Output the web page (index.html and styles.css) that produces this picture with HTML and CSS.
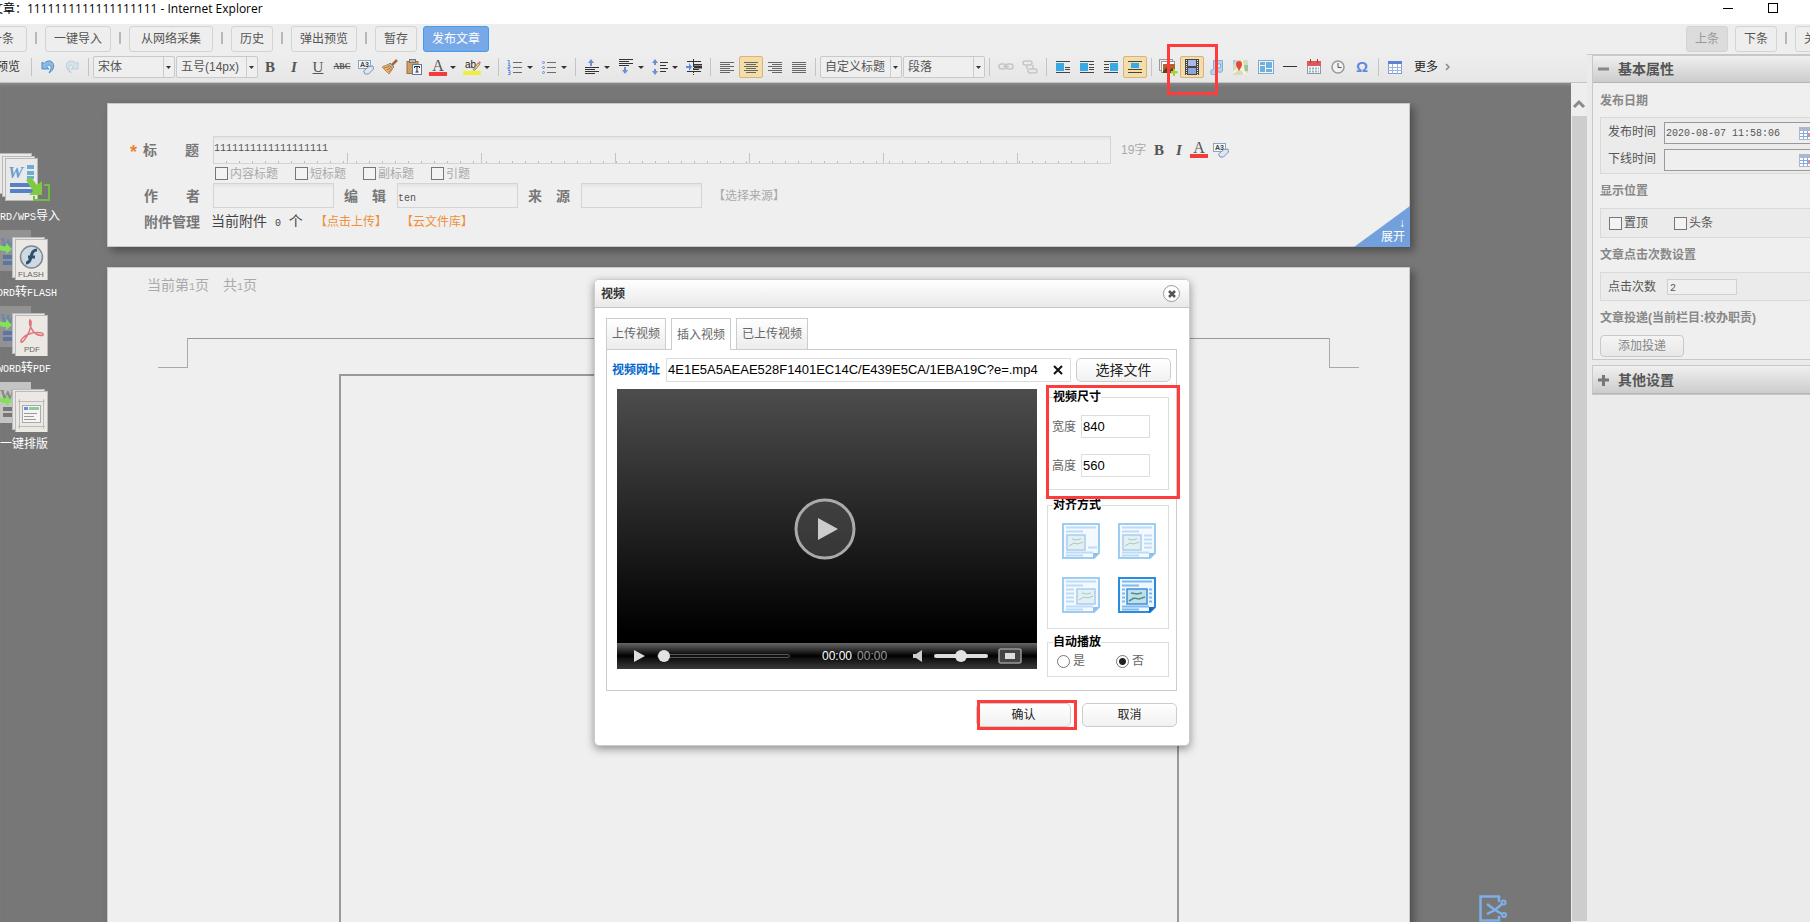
FILE: index.html
```html
<!DOCTYPE html>
<html lang="zh-CN">
<head>
  <meta charset="UTF-8"/>
  <meta name="viewport" content="width=device-width, initial-scale=1.0"/>
  <title>文章：1111111111111111111</title>
  <link rel="stylesheet" href="styles.css">
</head>
<body>
  <!-- 窗口标题栏 -->
  <div class="titlebar">
    <span class="title-text">文章：1111111111111111111 - Internet Explorer</span>
    <svg class="win-btns" width="60" height="16" viewBox="0 0 60 16" fill="none" stroke="#000"><path d="M3 7.500h10"/><rect x="48.500" y="2.500" width="9" height="9"/></svg>
  </div>

  <!-- 操作按钮 -->
  <div class="actions">
    <button class="btn first">一条</button><i class="bar"></i>
    <button class="btn">一键导入</button><i class="bar"></i>
    <button class="btn wide">从网络采集</button><i class="bar"></i>
    <button class="btn">历史</button><i class="bar"></i>
    <button class="btn">弹出预览</button><i class="bar"></i>
    <button class="btn">暂存</button>
    <button class="btn primary">发布文章</button>
    <div class="actions-right">
      <button class="btn" disabled>上条</button>
      <button class="btn">下条</button><i class="bar"></i>
      <button class="btn">关闭</button>
    </div>
  </div>

  <div class="main">
    <div class="editor">
      <!-- 编辑工具栏 -->
      <div class="toolbar">
        <button class="preview">预览</button><i class="sep"></i>
        <button class="tb" title="撤销"><svg width="14" height="14" viewBox="0 0 14 14"><path d="M1 2v7h7L5.500 6.500C8 4 11 5.500 10 9l-2 4c5-3 6-8 3-11-2-2-6-1-8 1.500z" fill="#8bb9e6" stroke="#4f8dcb"/></svg></button>
        <button class="tb" title="重做"><svg width="14" height="14" viewBox="0 0 14 14"><path d="M13 2v7H6l2.500-2.500C6 4 3 5.500 4 9l2 4C1 10 0 5 3 2c2-2 6-1 8 1.500z" fill="#d3e2ec" stroke="#bcd0de"/></svg></button>
        <i class="sep"></i>
        <select class="tb-select" aria-label="字体"><option>宋体</option></select>
        <select class="tb-select" aria-label="字号"><option>五号(14px)</option></select>
        <button class="tb serif bold">B</button>
        <button class="tb serif bold italic">I</button>
        <button class="tb serif under">U</button>
        <button class="tb serif strike">ABC</button>
        <button class="tb" title="清除格式"><svg width="16" height="16" viewBox="0 0 16 16"><rect x=".5" y="1.500" width="12" height="8" fill="#f3f7fb" stroke="#8aa4c4"/><text x="2" y="8" font-family="Liberation Sans" font-size="7" font-weight="bold" fill="#444">A3</text><path d="M5.500 12 11 7.500l4-.5.5 3-5 5H7z" fill="#dfe6f2" stroke="#7f93b2"/></svg></button>
        <button class="tb" title="格式刷"><svg width="16" height="16" viewBox="0 0 16 16"><path d="M15 1 10 6" stroke="#a3683c" stroke-width="2.500"/><path d="m8 4 4 4-1.500 1.500-4-4z" fill="#b7b7b7" stroke="#8a7a6a"/><path d="M6 5.500 0 8l7 7 3.500-5z" fill="#edba77" stroke="#bf8747"/><path d="m2 9 5-1.500M4.500 11l4-2M6.500 13l3-3" stroke="#a8733a"/></svg></button>
        <button class="tb" title="粘贴文本"><svg width="16" height="16" viewBox="0 0 16 16"><rect x="1" y="2.500" width="11" height="12" fill="#cf9d66" stroke="#9c6e41"/><rect x="3.500" y=".5" width="6" height="3" fill="#bbb" stroke="#777"/><rect x="6.500" y="5.500" width="9" height="10" fill="#f4f7fb" stroke="#62799a"/><path d="M8.500 9V7.500h5V9M11 7.500V13M9.500 13h3" fill="none" stroke="#222"/></svg></button>
        <button class="tb drop serif"><span class="fc red">A</span></button>
        <button class="tb drop" title="背景色"><svg width="18" height="16" viewBox="0 0 18 16"><rect y="12" width="18" height="4" fill="#f1ee3a"/><text x="2" y="9" font-family="Liberation Sans" font-size="10" fill="#222">ab</text><path d="m10 11 5-7 2 1-5 6z" fill="#ecc979" stroke="#a88a55"/><path d="m15 4 1-2 2 1.500L17 5z" fill="#e27c7c"/></svg></button>
        <i class="sep"></i>
        <button class="tb drop" title="编号"><svg width="16" height="16" viewBox="0 0 16 16"><path d="M6 3.500h9M6 8.500h9M6 13.500h9" stroke="#6b6b6b"/><path d="M2 1v4M.5 1.500H2M1 5h2M1 6.500h2v2H1v1.500h2M1 11.500h2v4H1M1.500 13.500H3" fill="none" stroke="#5f8be0"/></svg></button>
        <button class="tb drop" title="列表"><svg width="16" height="16" viewBox="0 0 16 16"><path d="M6 3.500h9M6 8.500h9M6 13.500h9" stroke="#6b6b6b"/><g fill="none" stroke="#5f8be0"><circle cx="2.500" cy="3.500" r="1"/><circle cx="2.500" cy="8.500" r="1"/><circle cx="2.500" cy="13.500" r="1"/></g></svg></button>
        <i class="sep"></i>
        <button class="tb drop" title="段前距"><svg width="16" height="16" viewBox="0 0 16 16"><path d="M1 8.500h14M1 10.500h10M1 12.500h14M1 14.500h10" stroke="#333"/><path d="m7 0 3 4H8v3H6V4H4z" fill="#6c8fd0"/></svg></button>
        <button class="tb drop" title="段后距"><svg width="16" height="16" viewBox="0 0 16 16"><path d="M1 .5h14M1 2.500h10M1 4.500h14M1 6.500h10" stroke="#333"/><path d="m7 15 3-4H8V8H6v3H4z" fill="#6c8fd0"/></svg></button>
        <button class="tb drop" title="行距"><svg width="16" height="16" viewBox="0 0 16 16"><path d="M8 3.500h8M8 6.500h6M8 9.500h8M8 12.500h6" stroke="#333"/><path d="m3 0 3 4H4v2H2V4H0zM3 16l3-4H4v-2H2v2H0z" fill="#6c8fd0"/></svg></button>
        <button class="tb" title="缩进"><svg width="16" height="16" viewBox="0 0 16 16"><path d="M1 2.500h14M7 5.500h9M7 10.500h6M1 12.500h14" stroke="#333"/><path d="M8 8h8" stroke="#333" stroke-width="3"/><path d="M7.500 0v16" stroke="#333" stroke-dasharray="2 1"/><path d="m6 8-3-4v3H0v2h3v3z" fill="#5f8be0"/></svg></button>
        <i class="sep"></i>
        <button class="tb" title="左对齐"><svg width="14" height="12" viewBox="0 0 14 12" stroke="#666"><path d="M0 1.500h14M0 3.500h10M0 5.500h14M0 7.500h10M0 9.500h14M0 11.500h10"/></svg></button>
        <button class="tb on" title="居中"><svg width="14" height="12" viewBox="0 0 14 12" stroke="#666"><path d="M0 1.500h14M2 3.500h10M0 5.500h14M2 7.500h10M0 9.500h14M2 11.500h10"/></svg></button>
        <button class="tb" title="右对齐"><svg width="14" height="12" viewBox="0 0 14 12" stroke="#666"><path d="M0 1.500h14M4 3.500h10M0 5.500h14M4 7.500h10M0 9.500h14M4 11.500h10"/></svg></button>
        <button class="tb" title="两端对齐"><svg width="14" height="12" viewBox="0 0 14 12" stroke="#666"><path d="M0 1.500h14M0 3.500h14M0 5.500h14M0 7.500h14M0 9.500h14M0 11.500h14"/></svg></button>
        <i class="sep"></i>
        <select class="tb-select" aria-label="自定义标题"><option>自定义标题</option></select>
        <select class="tb-select" aria-label="段落"><option>段落</option></select>
        <i class="sep"></i>
        <button class="tb" title="链接"><svg width="16" height="16" viewBox="0 0 16 16" fill="none" stroke="#c6c6c6" stroke-width="1.500"><rect x="1" y="5" width="7" height="5" rx="2.500"/><rect x="8" y="5" width="7" height="5" rx="2.500"/><path d="M5 7.500h6"/></svg></button>
        <button class="tb" title="取消链接"><svg width="16" height="16" viewBox="0 0 16 16" fill="none" stroke="#c6c6c6" stroke-width="1.500"><rect x="1" y="2" width="9" height="4" rx="2"/><rect x="6" y="10" width="9" height="4" rx="2"/><path d="M5 6v4M11 6v4"/></svg></button>
        <i class="sep"></i>
        <button class="tb" title="左环绕"><svg width="14" height="12" viewBox="0 0 14 12"><path d="M0 .5h14M9 6.500h5M9 8.500h5M0 11.500h14" stroke="#444"/><rect y="2" width="8" height="8" fill="#38a9e4"/></svg></button>
        <button class="tb" title="左侧"><svg width="14" height="12" viewBox="0 0 14 12"><path d="M0 .5h14M9 3.500h5M9 6.500h5M9 8.500h5M0 11.500h14" stroke="#444"/><rect y="2" width="8" height="8" fill="#38a9e4"/></svg></button>
        <button class="tb" title="右侧"><svg width="14" height="12" viewBox="0 0 14 12"><path d="M0 .5h14M0 3.500h5M0 6.500h5M0 8.500h5M0 11.500h14" stroke="#444"/><rect x="6" y="2" width="8" height="8" fill="#38a9e4"/></svg></button>
        <button class="tb on" title="图文居中"><svg width="14" height="12" viewBox="0 0 14 12"><path d="M0 .5h14M0 8.500h14M0 11.500h14" stroke="#444"/><rect x="3" y="2" width="8" height="5" fill="#38a9e4"/></svg></button>
        <i class="sep"></i>
        <button class="tb" title="图片"><svg width="20" height="18" viewBox="0 0 20 18"><rect x="1.500" y="1.500" width="13" height="11" fill="#eee" stroke="#999"/><rect x="3.500" y="3.500" width="13" height="11" fill="#fff" stroke="#999"/><rect x="5" y="6" width="12" height="9" fill="#b2622f"/><path d="m5 13 4-4 3 3 2-2 3 3v2H5z" fill="#5d4020"/><path d="M13 13h2v-2h2v2h2.500v2.500H17V18h-2v-2.500h-2z" fill="#a9cf3b"/></svg></button>
        <button class="tb on film" title="视频"><svg width="14" height="16" viewBox="0 0 14 16"><rect width="14" height="16" fill="#444"/><rect x="3" y="1" width="8" height="6" fill="#a9b8e8"/><rect x="3" y="9" width="8" height="6" fill="#8fa3dd"/><path d="M1.500 1v15M12.500 1v15" stroke="#eee" stroke-dasharray="1 1"/></svg><i class="mark"></i></button>
        <button class="tb" title="音乐"><svg width="16" height="16" viewBox="0 0 16 16" fill="#b3d3ee" stroke="#7fb0dc"><path d="M5.500 1.500h9v9.500a2.500 2.500 0 1 1-2-2.500V5H8v8a2.700 2.700 0 1 1-2.500-2.500z"/></svg></button>
        <button class="tb tb-wide" title="地图"><svg width="15" height="15" viewBox="0 0 15 15"><rect width="15" height="15" fill="#d6dcc2"/><path d="m0 13 6-5 9 7M9 0l2 15" stroke="#f6f3da" stroke-width="2" fill="none"/><path d="M11 5h4v6h-3z" fill="#9cc3a0"/><path d="M0 5l3-5H0z" fill="#a9c7e3"/><path d="M6 11C4 7 3 6 3 4a3 3 0 0 1 6 0c0 2-1 3-3 7z" fill="#e1483e"/></svg></button>
        <button class="tb tb-wide" title="布局"><svg width="16" height="14" viewBox="0 0 16 14"><rect x=".5" y=".5" width="15" height="13" fill="#eef5fb" stroke="#88a9c6"/><path d="M2 2h5v3H2zM8 2h6v6H8zM2 6h5v6H2zM8 9h6v3H8z" fill="#6fb0de"/></svg></button>
        <button class="tb" title="分隔线"><svg width="14" height="2" viewBox="0 0 14 2"><path d="M0 .5h14" stroke="#333"/></svg></button>
        <button class="tb" title="日期"><svg width="14" height="16" viewBox="0 0 14 16"><rect x=".5" y="2.500" width="13" height="12" fill="#f5f8fa" stroke="#8c9aa5"/><rect y="2" width="14" height="5" fill="#e0595a"/><path d="M3.500 0v4M10.500 0v4" stroke="#a33"/><path d="M2 9.500h10M2 12.500h10" stroke="#9fb0bb" stroke-width="2" stroke-dasharray="2 1"/></svg></button>
        <button class="tb" title="时间"><svg width="14" height="14" viewBox="0 0 14 14" fill="none"><circle cx="7" cy="7" r="6" fill="#f2f2f2" stroke="#9a9a9a" stroke-width="1.500"/><path d="M7 3v4.500h3.500" stroke="#555"/></svg></button>
        <button class="tb omega" title="特殊字符">Ω</button>
        <i class="sep"></i>
        <button class="tb" title="表格"><svg width="14" height="13" viewBox="0 0 14 13"><rect x=".5" y=".5" width="13" height="12" fill="#fff" stroke="#7f9ad8"/><path d="M0 1.500h14" stroke="#5f83d2" stroke-width="3"/><path d="M0 6.500h14M0 9.500h14M4.500 3v10M9.500 3v10" stroke="#9fb2e0"/></svg></button>
        <button class="more">更多 <svg width="5" height="8" viewBox="0 0 5 8" fill="none" stroke="#888" stroke-width="1.500"><path d="m1 1 3 3-3 3"/></svg></button>
      </div>

      <div class="work">
        <!-- 左侧导入工具 -->
        <div class="tools">
          <button class="tool">
            <svg width="52" height="52" viewBox="0 0 52 52"><g fill="#e9e9e9" stroke="#b9b9b9"><rect x="1.500" y="1.500" width="32" height="40"/><rect x="4.500" y="4.500" width="32" height="40"/><rect x="7.500" y="6.500" width="32" height="42"/></g><text x="10" y="26" font-family="Liberation Serif" font-size="17" font-weight="bold" font-style="italic" fill="#6a9dd0">W</text><path d="M29 13h7v4h-7zM29 19h7v4h-7zM29 24h7v3h-7z" fill="#6eabd6"/><path d="M12 31h24v4H12zM12 37h24v4H12z" fill="#5780c5"/><path d="M46 33h5v15H36v-4" fill="none" stroke="#72bf3e" stroke-width="2"/><path d="m28 28 5-3 6 8 5-4v14H31l4-4z" fill="#7fca42"/></svg>
            <span><span class="mono">WORD/WPS</span>导入</span>
          </button>
          <button class="tool">
            <svg width="52" height="52" viewBox="0 0 52 52"><rect x="0" y="2" width="33" height="41" fill="#929292"/><path d="M5 27h10v4H5zM5 33h10v4H5z" fill="#5b76a5"/><text x="2" y="20" font-family="Liberation Serif" font-size="14" font-weight="bold" fill="#6e87a5">W</text><path d="M0 14c2 4 5 5 8 4v-3l6 6-6 5v-3c-4 0-7-1-8-4z" fill="#84e05a"/><rect x="14.500" y="9.500" width="32" height="40" fill="#e6e6e6" stroke="#bbb"/><rect x="17.500" y="11.500" width="32" height="41" fill="#ece9e5" stroke="#bbb"/><circle cx="33.500" cy="29" r="11" fill="#cfd9e2" stroke="#7a8894" stroke-width="1.500"/><path d="M39 22c-6 0-5 6-7 10-1 2-2 3-4 3M30 29h7" fill="none" stroke="#2f516c" stroke-width="3"/><text x="20" y="49" font-family="Liberation Sans" font-size="8" fill="#666">FLASH</text></svg>
            <span><span class="mono">WORD</span>转<span class="mono">FLASH</span></span>
          </button>
          <button class="tool">
            <svg width="52" height="52" viewBox="0 0 52 52"><rect x="0" y="2" width="33" height="41" fill="#929292"/><path d="M5 27h10v4H5zM5 33h10v4H5z" fill="#5b76a5"/><text x="2" y="20" font-family="Liberation Serif" font-size="14" font-weight="bold" fill="#6e87a5">W</text><path d="M0 14c2 4 5 5 8 4v-3l6 6-6 5v-3c-4 0-7-1-8-4z" fill="#84e05a"/><rect x="14.500" y="9.500" width="32" height="40" fill="#e6e6e6" stroke="#bbb"/><rect x="17.500" y="11.500" width="32" height="41" fill="#ece9e5" stroke="#bbb"/><path d="M32 16c-2 4 2 11 6 14 4 2 8 2 7 0s-9-2-14 0-9 6-8 8 6-5 8-10 3-11 1-12z" fill="none" stroke="#e0737b" stroke-width="1.500"/><text x="26" y="48" font-family="Liberation Sans" font-size="8" fill="#666">PDF</text></svg>
            <span><span class="mono">WORD</span>转<span class="mono">PDF</span></span>
          </button>
          <button class="tool">
            <svg width="52" height="52" viewBox="0 0 52 52"><rect x="0" y="2" width="33" height="41" fill="#c4c4c4"/><path d="M5 27h10v4H5zM5 33h10v4H5z" fill="#777"/><text x="2" y="20" font-family="Liberation Serif" font-size="14" font-weight="bold" fill="#888">W</text><path d="M0 14c2 4 5 5 8 4v-3l6 6-6 5v-3c-4 0-7-1-8-4z" fill="#84e05a"/><rect x="14.500" y="9.500" width="32" height="40" fill="#e6e6e6" stroke="#bbb"/><rect x="17.500" y="11.500" width="32" height="41" fill="#ece9e5" stroke="#bbb"/><path d="M20 21.500h27M20 46.500h27M21.500 19v30M45.500 19v30" stroke="#bbb"/><rect x="24.500" y="25.500" width="18" height="17" fill="#f5f5f5" stroke="#aaa"/><path d="M26 28.500h4" stroke="#5d93e0" stroke-width="3"/><path d="M31 28.500h10" stroke="#8fc9a0" stroke-width="3"/><path d="M26 33.500h13M26 36.500h10M26 39.500h12" stroke="#999"/></svg>
            <span>一键排版</span>
          </button>
        </div>

        <div class="pages">
          <!-- 标题信息 -->
          <form class="sheet meta">
            <div class="row title-row">
              <span class="star">*</span>
              <label class="name" for="f-title"><span>标</span><span>题</span></label>
              <input class="field title-input" type="text" id="f-title" value="1111111111111111111"/>
              <span class="count">19字</span>
              <button type="button" class="tf serif bold">B</button>
              <button type="button" class="tf serif bold italic">I</button>
              <button type="button" class="tf serif"><span class="fc red">A</span></button>
              <button type="button" class="tf" title="清除格式"><svg width="16" height="16" viewBox="0 0 16 16"><rect x=".5" y="1.500" width="12" height="8" fill="#f3f7fb" stroke="#8aa4c4"/><text x="2" y="8" font-family="Liberation Sans" font-size="7" font-weight="bold" fill="#444">A3</text><path d="M5.500 12 11 7.500l4-.5.5 3-5 5H7z" fill="#dfe6f2" stroke="#7f93b2"/></svg></button>
            </div>
            <div class="row checks">
              <label><input type="checkbox"/>内容标题</label>
              <label><input type="checkbox"/>短标题</label>
              <label><input type="checkbox"/>副标题</label>
              <label><input type="checkbox"/>引题</label>
            </div>
            <div class="row author-row">
              <label class="name" for="f-author"><span>作</span><span>者</span></label>
              <input class="field" type="text" id="f-author"/>
              <label class="name short" for="f-editor"><span>编</span><span>辑</span></label>
              <input class="field" type="text" id="f-editor" value="ten"/>
              <label class="name short" for="f-source"><span>来</span><span>源</span></label>
              <input class="field" type="text" id="f-source"/>
              <a class="pick" href="#">【选择来源】</a>
            </div>
            <div class="row attach">
              <b>附件管理</b>
              <span class="attach-n">当前附件 <span class="mono">0</span> 个</span>
              <a href="#">【点击上传】</a>
              <a href="#">【云文件库】</a>
            </div>
            <button type="button" class="expand"><span>↓</span><span>展开</span></button>
          </form>

          <!-- 正文 -->
          <div class="sheet paper">
            <p class="pageno">当前第<span class="mono">1</span>页&#12288;共<span class="mono">1</span>页</p>
            <div class="crop"><i class="corner-l"></i><div class="crop-in"><div class="frame"></div></div><i class="corner-r"></i></div>
          </div>
        </div>

        <div class="gutter">
          <svg width="28" height="27" viewBox="0 0 28 27" fill="none" stroke="#7fafe9" stroke-width="2.500"><path d="M20 7V1.500H1.500v24H20V21"/><path d="m8 9 8 6 7 4M8 19l8-4 7-6" stroke-width="2.500"/><circle cx="24.500" cy="7.500" r="2" stroke-width="2"/><circle cx="25" cy="20" r="2" stroke-width="2"/></svg>
        </div>
        <div class="scroll">
          <svg width="16" height="33" viewBox="0 0 16 33" fill="none" stroke="#8a8a8a" stroke-width="3"><path d="m3 24 5-5 5 5"/></svg>
          <div class="thumb"></div>
        </div>
      </div>
    </div>

    <!-- 右侧属性 -->
    <div class="side">
      <div class="panel">
        <h3><svg width="12" height="12" viewBox="0 0 12 12"><path d="M0 6h11" stroke="#888" stroke-width="3"/></svg>基本属性</h3>
        <div class="panel-body">
          <h4>发布日期</h4>
          <div class="box dates">
            <div><label for="d1">发布时间</label><input type="text" id="d1" value="2020-08-07 11:58:06"/></div>
            <div><label for="d2">下线时间</label><input type="text" id="d2"/></div>
          </div>
          <h4>显示位置</h4>
          <div class="box pos">
            <label><input type="checkbox"/>置顶</label>
            <label><input type="checkbox"/>头条</label>
          </div>
          <h4>文章点击次数设置</h4>
          <div class="box hits"><label for="hits">点击次数</label><input type="text" id="hits" value="2"/></div>
          <h4>文章投递(当前栏目:校办职责)</h4>
          <button class="add">添加投递</button>
        </div>
      </div>
      <div class="panel second">
        <h3><svg width="12" height="12" viewBox="0 0 12 12"><path d="M0 6h11M5.500 1v11" stroke="#777" stroke-width="3"/></svg>其他设置</h3>
      </div>
    </div>
  </div>

  <!-- 视频对话框 -->
  <div class="dialog" role="dialog" aria-label="视频">
    <div class="dlg-head">
      <b>视频</b>
      <button class="close" title="关闭"><svg width="8" height="8" viewBox="0 0 8 8" stroke="#555" stroke-width="2.500"><path d="m1 1 6 6M7 1 1 7"/></svg></button>
    </div>
    <div class="dlg-body">
      <div class="tabs">
        <button>上传视频</button>
        <button class="cur">插入视频</button>
        <button>已上传视频</button>
      </div>
      <div class="tab-body">
        <div class="url-row">
          <label for="url">视频网址</label>
          <div class="url-box">
            <input type="text" id="url" value="4E1E5A5AEAE528F1401EC14C/E439E5CA/1EBA19C?e=.mp4"/>
            <button title="清空"><svg width="10" height="10" viewBox="0 0 10 10" stroke="#111" stroke-width="2"><path d="m1 1 8 8M9 1 1 9"/></svg></button>
          </div>
          <button class="round file">选择文件</button>
        </div>
        <div class="cols">
          <div class="player">
            <div class="screen">
              <svg width="62" height="62" viewBox="0 0 62 62"><circle cx="31" cy="31" r="29" fill="#555" fill-opacity=".5" stroke="#aaa" stroke-width="3"/><path d="m24 20 20 11-20 11z" fill="#ccc"/></svg>
            </div>
            <div class="controls">
              <svg class="c-play" width="11" height="12" viewBox="0 0 11 12"><path d="m0 0 11 6-11 6z" fill="#ddd"/></svg>
              <input class="seek" type="range" min="0" max="100" value="0" aria-label="进度"/>
              <span class="now">00:00</span><span class="dur">00:00</span>
              <svg class="c-vol" width="10" height="12" viewBox="0 0 10 12"><path d="M0 4h3l6-4v12L3 8H0z" fill="#ccc"/></svg>
              <input class="vol" type="range" min="0" max="100" value="50" aria-label="音量"/>
              <svg class="c-full" width="24" height="16" viewBox="0 0 24 16"><rect x="1" y="1" width="22" height="14" rx="2" fill="#444" stroke="#999" stroke-width="1.500"/><rect x="7" y="5" width="10" height="6" fill="#ddd"/></svg>
            </div>
          </div>
          <div class="opts">
            <fieldset class="size">
              <legend>视频尺寸</legend>
              <div><label for="w">宽度</label><input type="text" id="w" value="840"/></div>
              <div><label for="h">高度</label><input type="text" id="h" value="560"/></div>
              <i class="mark"></i>
            </fieldset>
            <fieldset class="align">
              <legend>对齐方式</legend>
              <div class="align-list">
                <button title="无"><svg width="38" height="36" viewBox="0 0 38 36"><path d="M1 1h36v29l-5 5H1z" fill="#f3f9fe" stroke="#9fcdf0" stroke-width="2"/><path d="M4 4.500h30M4 8.500h17M26 24.500h9M4 29.500h27M4 32.500h17" stroke="#bfdcf7" stroke-width="2"/><rect x="5" y="12" width="18" height="15" fill="#e2f0f4" stroke="#a9cdef" stroke-width="1.500"/><path d="m7 23 5-3 4 1 5-2M10 16l5 1 4-1" stroke="#aac9b8" fill="none"/><path d="m31 36 6-6h-6z" fill="#8fbdec"/></svg></button>
                <button title="居左"><svg width="38" height="36" viewBox="0 0 38 36"><path d="M1 1h36v29l-5 5H1z" fill="#f3f9fe" stroke="#9fcdf0" stroke-width="2"/><path d="M4 4.500h30M4 8.500h17M26 12.500h8M26 16.500h8M26 20.500h8M26 24.500h8M4 29.500h27M4 32.500h17" stroke="#bfdcf7" stroke-width="2"/><rect x="5" y="12" width="18" height="15" fill="#e2f0f4" stroke="#a9cdef" stroke-width="1.500"/><path d="m7 23 5-3 4 1 5-2M10 16l5 1 4-1" stroke="#aac9b8" fill="none"/><path d="m31 36 6-6h-6z" fill="#8fbdec"/></svg></button>
                <button title="居右"><svg width="38" height="36" viewBox="0 0 38 36"><path d="M1 1h36v29l-5 5H1z" fill="#f3f9fe" stroke="#9fcdf0" stroke-width="2"/><path d="M4 4.500h30M4 8.500h17M4 12.500h8M4 16.500h8M4 20.500h8M4 24.500h8M4 29.500h27M4 32.500h17" stroke="#bfdcf7" stroke-width="2"/><rect x="15" y="12" width="18" height="15" fill="#e2f0f4" stroke="#a9cdef" stroke-width="1.500"/><path d="m17 23 5-3 4 1 5-2M20 16l5 1 4-1" stroke="#aac9b8" fill="none"/><path d="m31 36 6-6h-6z" fill="#8fbdec"/></svg></button>
                <button title="居中"><svg width="38" height="36" viewBox="0 0 38 36"><path d="M1 1h36v29l-5 5H1z" fill="#eef7fe" stroke="#2b8bdc" stroke-width="2"/><path d="M4 4.500h30M4 8.500h17M4 12.500h3M4 16.500h3M4 20.500h3M4 24.500h3M31 12.500h3M31 16.500h3M31 20.500h3M31 24.500h3M4 29.500h27M4 32.500h17" stroke="#7fb9ee" stroke-width="2"/><rect x="9" y="12" width="20" height="15" fill="#bfe0ea" stroke="#3f8fd8" stroke-width="1.500"/><path d="m11 24 5-3 5 1 6-2M13 16l6 1 5-1" stroke="#578f86" stroke-width="1.500" fill="none"/><path d="m31 36 6-6h-6z" fill="#1568c4"/></svg></button>
              </div>
            </fieldset>
            <fieldset class="auto">
              <legend>自动播放</legend>
              <div class="radios">
                <label><input type="radio" name="auto"/>是</label>
                <label><input type="radio" name="auto" checked/>否</label>
              </div>
            </fieldset>
          </div>
        </div>
      </div>
      <div class="dlg-foot">
        <div class="ok"><button class="round">确认</button><i class="mark"></i></div>
        <button class="round">取消</button>
      </div>
    </div>
  </div>
</body>
</html>
```
FILE: styles.css
```css
* { box-sizing: border-box; }
body { margin: 0; height: 100vh; overflow: hidden; display: flex; flex-direction: column; position: relative; background: #eee; color: #555; font: 12px/16px "Liberation Sans", "Noto Sans CJK SC", sans-serif; }
button, input, select { font: inherit; color: inherit; margin: 0; padding: 0; }
button { background: none; border: 0; cursor: pointer; white-space: nowrap; }
a { color: inherit; text-decoration: none; }
svg { display: block; flex: none; }
.mono { font: 10px/16px "Liberation Mono", monospace; }
.mark { position: absolute; border: 3px solid #ff3b3b; pointer-events: none; z-index: 2; }

input[type="checkbox"], input[type="radio"] { appearance: none; width: 13px; height: 13px; border: 1px solid #777; background: #f3f3f3; flex: none; }
input[type="radio"] { border-radius: 50%; background: #fff; }
input[type="radio"]:checked { background: radial-gradient(circle, #222 0 3px, #fff 4px); }

/* 标题栏 */
.titlebar { height: 24px; padding-top: 1px; flex: none; background: #fff; color: #000; display: flex; justify-content: space-between; align-items: flex-start; }
.title-text { margin-left: -9px; font-family: "Open Sans", "Noto Sans CJK SC", sans-serif; }
.win-btns { margin-right: 30px; }

/* 操作按钮 */
.actions { height: 30px; flex: none; display: flex; align-items: flex-start; padding-top: 2px; overflow: hidden; }
.btn { height: 26px; padding: 0 8px; border: 1px solid #d3d3d3; border-radius: 3px; flex: none; }
.btn.first { margin-left: -23px; padding: 0 12px; }
.btn.wide { padding: 0 11px; }
.btn.primary { margin-left: 6px; background: #79a8e8; border-color: #3f9fe8; color: #fff; }
.btn:disabled { background: #dcdcdc; color: #999; }
.bar { width: 2px; height: 12px; margin: 6px 8px 0; background: #b8b8b8; flex: none; }
.actions-right { margin-left: auto; margin-right: -27px; display: flex; }
.actions-right .btn:first-child { margin-right: 7px; }

.main { flex: 1; min-height: 0; display: flex; }
.editor { flex: 1; min-width: 0; display: flex; flex-direction: column; }

/* 工具栏 */
.toolbar { height: 29px; flex: none; display: flex; align-items: center; padding-bottom: 2px; border-bottom: 1px solid #c4c4c4; background: linear-gradient(#eee, #e6e6e6); }
.preview { margin-left: -4px; margin-right: 7px; color: #333; flex: none; }
.sep { width: 1px; height: 18px; margin: 0 4px; background: #c4c4c8; flex: none; }
.tb { width: 24px; height: 22px; display: flex; align-items: center; justify-content: center; position: relative; flex: none; border: 1px solid transparent; border-radius: 2px; color: #555; }
.tb-wide { width: 25px; }
.tb.on { background: #f3deaa; border-color: #d9b27c; }
.tb.drop { width: 34px; padding-right: 10px; }
.tb.drop::after { content: ""; position: absolute; right: 3px; top: 9px; border: 3px solid transparent; border-top-color: #333; }
.tb-select { appearance: none; width: 82px; height: 22px; padding-left: 4px; flex: none; border: 1px solid #c9c9c9; border-radius: 2px; background: linear-gradient(#ccc, #ccc) right 10px top / 1px 100% no-repeat, url("data:image/svg+xml,%3Csvg xmlns='http://www.w3.org/2000/svg' width='5' height='3'%3E%3Cpath d='M0 0h5L2.500 3z' fill='%23333'/%3E%3C/svg%3E") right 3px center no-repeat, #efefef; }
.tb-select + .tb-select { margin-left: 1px; }
.serif { font-family: "Liberation Serif", serif; font-size: 15px; }
.bold { font-weight: bold; }
.italic { font-style: italic; }
.under { text-decoration: underline; }
.strike { font-size: 8px; font-weight: bold; text-decoration: line-through; }
.fc { width: 18px; line-height: 13px; text-align: center; font-size: 16px; }
.red { border-bottom: 4px solid #f33b3b; }
.film { z-index: 3; }
.film .mark { left: -14px; top: -13px; width: 51px; height: 51px; }
.omega { color: #5f8be0; font-size: 15px; font-weight: bold; }
.more { display: flex; align-items: center; gap: 7px; padding-left: 7px; color: #222; }

/* 工作区 */
.work { flex: 1; min-height: 0; display: flex; background: #777; box-shadow: inset 0 3px 3px -1px #8a8a8a; }
.tools { width: 107px; padding-top: 69px; flex: none; }
.tool { width: 48px; height: 76px; display: flex; flex-direction: column; align-items: center; line-height: 24px; color: #fff; }
.tool .mono { line-height: 24px; }
.pages { flex: 1; min-width: 0; padding-top: 20px; display: flex; flex-direction: column; gap: 20px; }
.sheet { background: #efefef; border: 1px solid #c8c8c8; box-shadow: 4px 4px 8px rgba(0,0,0,.35); }
.meta { height: 144px; padding-top: 31px; position: relative; flex: none; color: #777; }
.row { display: flex; align-items: center; }
.title-row { height: 29px; padding-left: 22px; }
.star { width: 13px; padding-top: 5px; color: #f08030; font-size: 18px; font-weight: bold; }
.name { width: 56px; display: flex; justify-content: space-between; margin-right: 14px; flex: none; font-size: 14px; font-weight: bold; color: #777; }
.name.short { width: 42px; margin: 0 11px 0 10px; }
.field { width: 121px; height: 25px; padding: 5px 0 0; border: 1px solid #d4d4d4; background: linear-gradient(#e3e3e3, #efefef 4px); font: 10px/16px "Liberation Mono", monospace; color: #555; }
.title-input { flex: 1; min-width: 0; height: 28px; padding: 0 0 2px; margin-right: 10px; background: repeating-linear-gradient(90deg, transparent 0 133px, #c4c4c4 133px 134px) 0 100% / 100% 10px no-repeat, linear-gradient(90deg, transparent 12px, #bbb 12px) 0 100% / 13px 2px repeat-x, linear-gradient(#e3e3e3, #efefef 4px); }
.count { width: 28px; color: #aaa; }
.tf { width: 20px; height: 20px; display: flex; align-items: center; justify-content: center; color: #555; }
.tf:last-child { width: 24px; margin-right: 176px; }
.checks { height: 19px; padding-left: 107px; gap: 17px; color: #aaa; }
.checks label { display: flex; align-items: center; gap: 2px; }
.author-row { height: 25px; padding-left: 36px; }
.author-row .name:first-child { margin-right: 13px; }
.pick { margin-left: 11px; color: #aaa; }
.attach { height: 28px; padding-left: 36px; }
.attach b { width: 67px; font-size: 14px; }
.attach-n { width: 104px; font-size: 14px; color: #444; }
.attach-n .mono { padding: 0 4px; }
.attach a { margin-right: 14px; color: #f0913a; }
.expand { position: absolute; right: -1px; bottom: -1px; width: 56px; height: 41px; padding: 10px 5px 0 0; display: flex; flex-direction: column; align-items: flex-end; line-height: 14px; color: #fff; background: #72a0dc; clip-path: polygon(100% 0, 100% 100%, 0 100%); }

.paper { flex: 1; display: flex; flex-direction: column; border-bottom: 0; }
.pageno { margin: 8px 0 0 39px; font-size: 14px; line-height: 18px; color: #aaa; }
.crop { flex: 1; display: flex; margin: 42px 50px 0 50px; }
.corner-l, .corner-r { width: 30px; height: 30px; border-bottom: 1px solid #aaa; flex: none; }
.corner-l { border-right: 1px solid #aaa; }
.corner-r { border-left: 1px solid #aaa; }
.crop-in { flex: 1; padding: 35px 150px 0 151px; border-top: 1px solid #999; display: flex; }
.frame { flex: 1; border: 2px solid #999; border-bottom: 0; }
.gutter { width: 161px; display: flex; align-items: flex-end; padding-left: 69px; flex: none; }
.scroll { width: 16px; display: flex; flex-direction: column; flex: none; background: #eee; }
.thumb { flex: 1; margin: 0 0 1px 1px; background: #cdcdcd; }

/* 右侧 */
.side { width: 223px; flex: none; padding: 0 0 0 5px; overflow: hidden; border-top: 1px solid #c8c8c8; background: #ebebeb; }
.panel { margin-right: -20px; border: 1px solid #c8c8c8; background: #efefef; }
.panel.second { margin-top: 5px; }
.panel h3 { margin: 0; height: 27px; padding-left: 5px; display: flex; align-items: center; gap: 8px; font-size: 14px; color: #555; background: linear-gradient(#f0f0f0, #ccc); border-bottom: 1px solid #b5b5b5; }
.panel.second h3 { height: 28px; }
.panel-body { padding: 0 0 2px 7px; }
.panel h4 { margin: 0; padding-top: 1px; height: 34px; line-height: 34px; font-size: 12px; color: #888; }
.panel .box + h4 { line-height: 32px; }
.box { border: 1px solid #d9d9d9; background: #ebebeb; padding-left: 7px; }
.dates { height: 57px; padding-top: 4px; }
.dates div { display: flex; align-items: flex-start; height: 27px; gap: 8px; line-height: 20px; }
.dates input { width: 164px; height: 22px; padding-left: 1px; border: 1px solid #999; font: 10px/16px "Liberation Mono", monospace; background: url("data:image/svg+xml,%3Csvg xmlns='http://www.w3.org/2000/svg' width='16' height='13'%3E%3Crect width='16' height='13' fill='%23a9b8d0'/%3E%3Cpath d='M1 4h14v8H1z' fill='%23fff'/%3E%3Cpath d='M1 6.500h14M1 9.500h14M4.500 4v8M8.500 4v8' stroke='%2386a8dc'/%3E%3Cpath d='M9 6h3v3H9z' fill='%23e88'/%3E%3C/svg%3E") 134px center no-repeat, #efefef; }
.pos { height: 30px; display: flex; align-items: center; gap: 26px; }
.pos label { display: flex; align-items: center; gap: 2px; }
.pos label:first-child { margin-left: 1px; }
.hits { height: 29px; display: flex; align-items: center; gap: 11px; }
.hits input { width: 70px; height: 16px; padding: 3px 0 0 2px; border: 1px solid #d0d0d0; background: #efefef; font: 10px/12px "Liberation Mono", monospace; }
.add { width: 84px; height: 22px; border: 1px solid #c8c8c8; border-radius: 4px; background: linear-gradient(#f4f4f4, #e8e8e8); color: #888; display: block; }

/* 对话框 */
.dialog { position: absolute; left: 594px; top: 279px; width: 596px; border: 1px solid #ccc; border-radius: 5px; background: #fff; box-shadow: 0 3px 8px rgba(0,0,0,.4); overflow: hidden; z-index: 5; }
.dlg-head { height: 28px; display: flex; align-items: center; justify-content: space-between; padding: 0 9px 0 6px; border-bottom: 1px solid #c4c4c4; background: linear-gradient(#fff, #e9e9e9); color: #333; }
.close { width: 17px; height: 17px; border: 1px solid #999; border-radius: 50%; background: #fff; display: flex; align-items: center; justify-content: center; }
.dlg-body { padding: 10px 12px 18px 11px; }
.tabs { display: flex; gap: 5px; }
.tabs button { height: 31px; padding: 0 5px; border: 1px solid #ccc; border-bottom: 0; background: linear-gradient(#fff, #ececec); color: #666; }
.tabs .cur { position: relative; height: 32px; margin-bottom: -1px; background: #fff; }
.tab-body { height: 342px; padding: 8px 5px 0; border: 1px solid #ccc; }
.url-row { display: flex; align-items: center; height: 24px; }
.url-row label { width: 54px; font-weight: bold; color: #06c; }
.url-box { flex: 1; height: 24px; display: flex; border: 1px solid #ddd; color: #000; }
.url-box input { flex: 1; min-width: 0; border: 0; outline: 0; padding-left: 1px; font-size: 13px; }
.url-box button { width: 24px; display: flex; align-items: center; justify-content: center; }
.round { width: 95px; height: 24px; border: 1px solid #ccc; border-radius: 5px; background: linear-gradient(#fff, #f1f1f1); color: #222; }
.file { margin-left: 5px; font-size: 14px; }
.cols { display: flex; gap: 10px; margin-top: 7px; padding: 0 2px 0 5px; }
.player { flex: 1; height: 280px; display: flex; flex-direction: column; }
.screen { flex: 1; display: flex; align-items: flex-end; justify-content: center; padding: 0 4px 83px 0; background: linear-gradient(#4d4d4d, #000 96%); }
.controls { height: 26px; display: flex; align-items: center; padding: 0 15px 0 17px; background: linear-gradient(#666, #000 50%, #111 60%, #3a3a3a); font-size: 12px; color: #fff; }
.controls input { appearance: none; height: 12px; background: none; }
.seek { width: 133px; margin: 0 32px 0 12px; }
.vol { width: 54px; margin: 0 10px 0 11px; }
.seek::-webkit-slider-runnable-track { height: 4px; border: 1px solid #555; border-radius: 2px; background: #111; }
.vol::-webkit-slider-runnable-track { height: 4px; border-radius: 2px; background: #ddd; }
.controls input::-webkit-slider-thumb { appearance: none; width: 12px; height: 12px; margin-top: -5px; border-radius: 50%; background: #e2e2e2; }
.controls .vol::-webkit-slider-thumb { margin-top: -4px; }
.dur { margin: 0 auto 0 5px; color: #999; }
.opts { width: 122px; flex: none; color: #666; }
.opts fieldset { min-width: 0; margin: 0; padding: 0; border: 1px solid #ddd; position: relative; }
.opts legend { margin-left: 5px; padding: 0; line-height: 16px; font-weight: bold; color: #000; }
.size { height: 101px; }
.size div { display: flex; align-items: center; gap: 5px; height: 23px; margin: 10px 0 16px 4px; }
.size input { width: 69px; height: 23px; padding-left: 1px; border: 1px solid #ddd; font-size: 13px; color: #000; }
.size .mark { left: -2px; top: -20px; width: 134px; height: 114px; }
.opts .align { height: 132px; margin-top: 7px; }
.align-list { padding: 10px 0 0 14px; display: flex; flex-wrap: wrap; gap: 18px; }
.opts .auto { height: 43px; margin-top: 5px; }
.radios { display: flex; padding-left: 9px; line-height: 22px; }
.auto label { display: flex; align-items: center; gap: 3px; width: 59px; flex: none; }
.radios label:last-child { width: 40px; }
.dlg-foot { display: flex; justify-content: flex-end; gap: 11px; margin-top: 12px; }
.ok { position: relative; }
.ok .mark { left: 1px; top: -3px; width: 100px; height: 30px; }
```
